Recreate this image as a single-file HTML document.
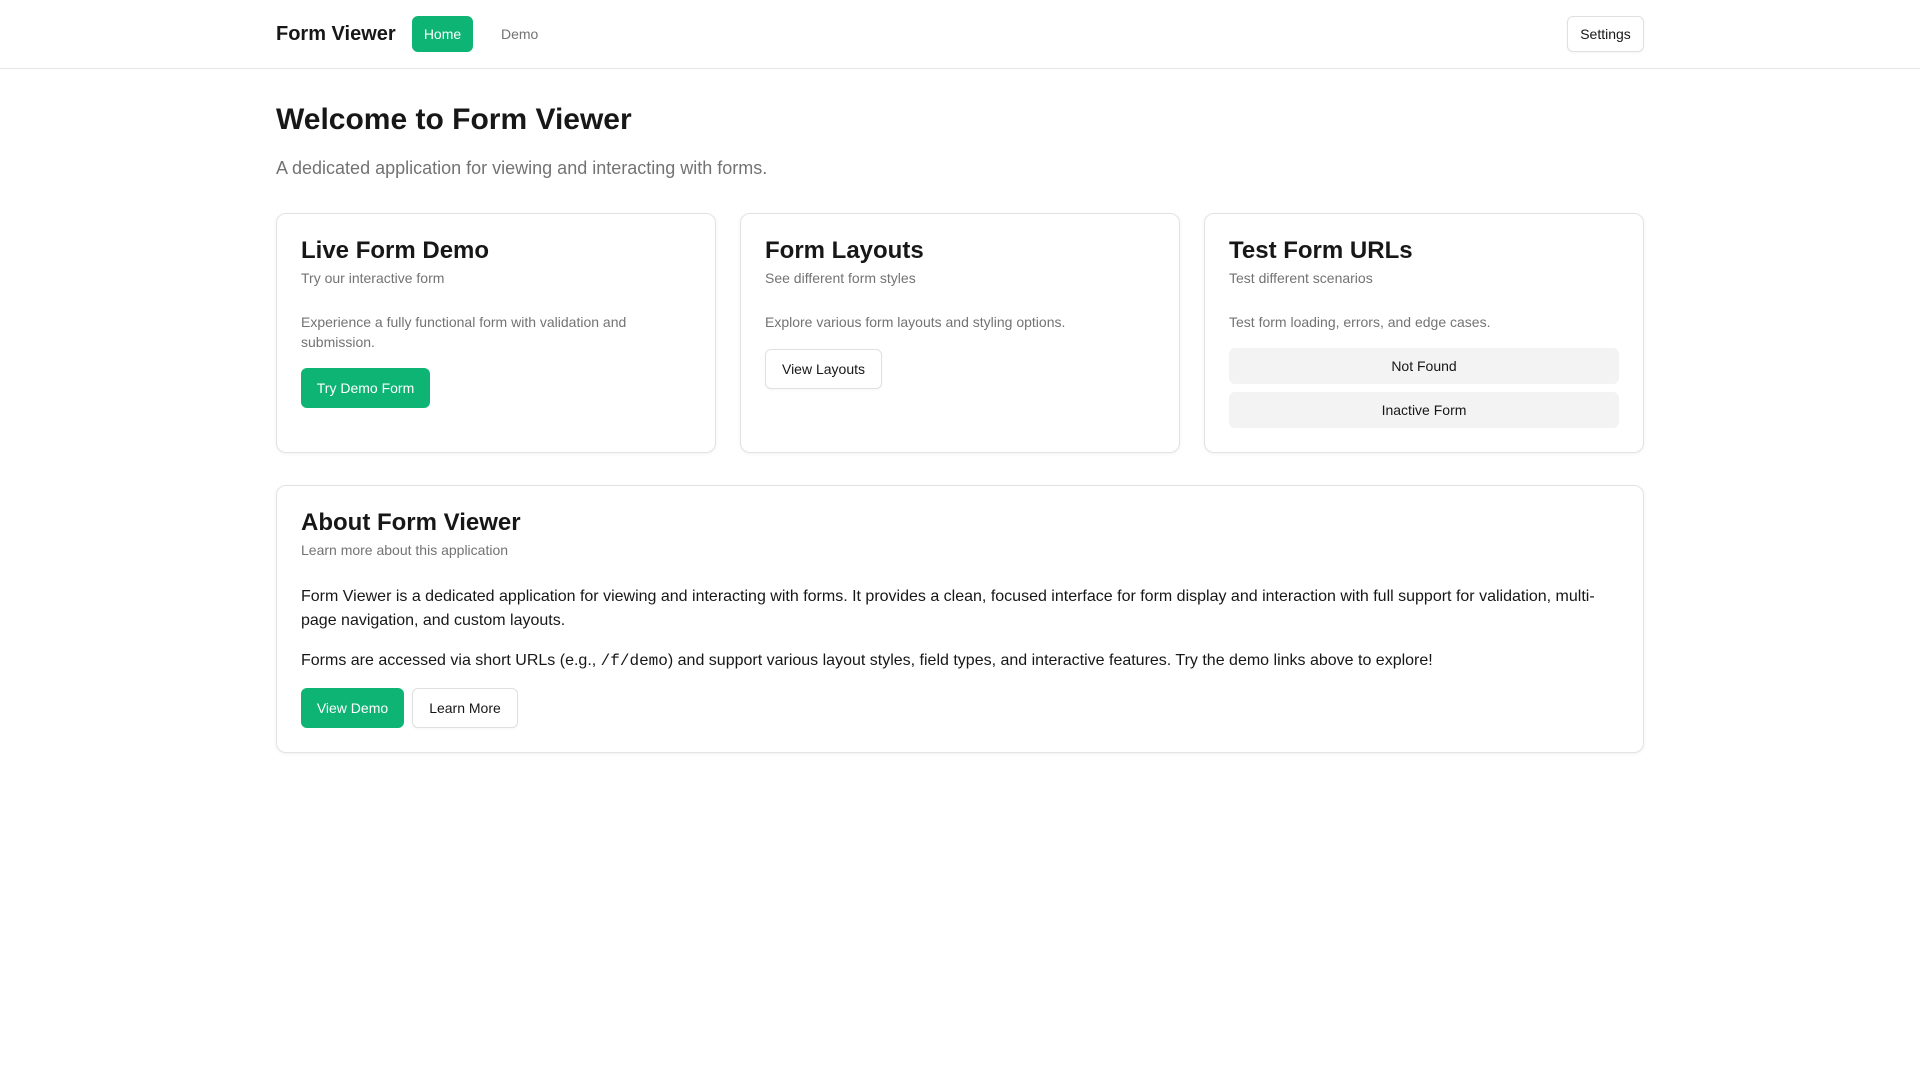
<!DOCTYPE html>
<html><head><meta charset="utf-8"><style>
*{box-sizing:border-box;margin:0;padding:0}
body{width:1920px;height:1080px;background:#fff;font-family:"Liberation Sans",sans-serif;color:#171717;position:relative;overflow:hidden}
.abs{position:absolute}
header{position:absolute;left:0;top:0;width:1920px;height:69px;border-bottom:1px solid #e5e5e5}
.brand{left:276px;top:20px;font-size:20px;font-weight:bold;line-height:28px}
.btn{position:absolute;display:flex;align-items:center;justify-content:center;font-size:14px;border-radius:6px}
.green{background:#0db474;color:#fff}
.outline{background:#fff;border:1px solid #e0e0e0;color:#171717;box-shadow:0 1px 2px rgba(0,0,0,.04)}
.gray{background:#f3f3f3;color:#171717}
.card{position:absolute;border:1px solid #e3e3e3;border-radius:10px;box-shadow:0 1px 3px rgba(0,0,0,.06);background:#fff}
.ct{position:absolute;left:24px;font-size:24px;font-weight:bold;line-height:30px}
.cs{position:absolute;left:24px;font-size:14px;color:#737373;line-height:20px}
.cd{position:absolute;left:24px;font-size:14px;color:#737373;line-height:20px}
.body{position:absolute;left:24px;font-size:16px;line-height:24px;color:#171717}
code{font-family:"Liberation Mono",monospace;font-size:16px}
</style></head><body>
<header>
<div class="abs brand">Form Viewer</div>
<div class="btn green" style="left:412px;top:16px;width:61px;height:36px">Home</div>
<div class="abs" style="left:501px;top:24px;font-size:14px;color:#737373;line-height:20px">Demo</div>
<div class="btn outline" style="left:1567px;top:16px;width:77px;height:36px">Settings</div>
</header>
<div class="abs" style="left:276px;top:101px;font-size:30px;font-weight:bold;line-height:38px">Welcome to Form Viewer</div>
<div class="abs" style="left:276px;top:155px;font-size:18px;color:#737373;line-height:26px">A dedicated application for viewing and interacting with forms.</div>

<div class="card" style="left:276px;top:213px;width:440px;height:240px">
<div class="ct" style="top:22px">Live Form Demo</div>
<div class="cs" style="top:54px">Try our interactive form</div>
<div class="cd" style="top:98px;width:390px">Experience a fully functional form with validation and submission.</div>
<div class="btn green" style="left:24px;top:154px;width:129px;height:40px">Try Demo Form</div>
</div>
<div class="card" style="left:740px;top:213px;width:440px;height:240px">
<div class="ct" style="top:22px">Form Layouts</div>
<div class="cs" style="top:54px">See different form styles</div>
<div class="cd" style="top:98px">Explore various form layouts and styling options.</div>
<div class="btn outline" style="left:24px;top:135px;width:117px;height:40px">View Layouts</div>
</div>
<div class="card" style="left:1204px;top:213px;width:440px;height:240px">
<div class="ct" style="top:22px">Test Form URLs</div>
<div class="cs" style="top:54px">Test different scenarios</div>
<div class="cd" style="top:98px">Test form loading, errors, and edge cases.</div>
<div class="btn gray" style="left:24px;top:134px;width:390px;height:36px">Not Found</div>
<div class="btn gray" style="left:24px;top:178px;width:390px;height:36px">Inactive Form</div>
</div>

<div class="card" style="left:276px;top:485px;width:1368px;height:268px">
<div class="ct" style="top:22px">About Form Viewer</div>
<div class="cs" style="top:54px">Learn more about this application</div>
<div class="body" style="top:99px;width:1320px">Form Viewer is a dedicated application for viewing and interacting with forms. It provides a clean, focused interface for form display and interaction with full support for validation, multi-page navigation, and custom layouts.</div>
<div class="body" style="top:163px">Forms are accessed via short URLs (e.g., <code>/f/demo</code>) and support various layout styles, field types, and interactive features. Try the demo links above to explore!</div>
<div class="btn green" style="left:24px;top:202px;width:103px;height:40px">View Demo</div>
<div class="btn outline" style="left:135px;top:202px;width:106px;height:40px">Learn More</div>
</div>
</body></html>
